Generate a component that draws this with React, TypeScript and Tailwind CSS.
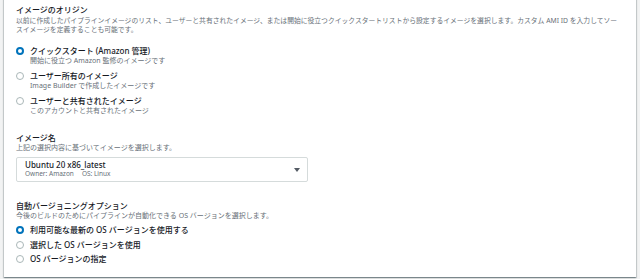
const originOptions = [
  { label: "クイックスタート (Amazon 管理)", sub: "開始に役立つ Amazon 監修のイメージです", checked: true },
  { label: "ユーザー所有のイメージ", sub: "Image Builder で作成したイメージです", checked: false },
  { label: "ユーザーと共有されたイメージ", sub: "このアカウントと共有されたイメージ", checked: false },
];

const versionOptions = [
  { label: "利用可能な最新の OS バージョンを使用する", checked: true },
  { label: "選択した OS バージョンを使用", checked: false },
  { label: "OS バージョンの指定", checked: false },
];

function Radio({ checked }: { checked: boolean }) {
  return (
    <span
      className={
        checked
          ? "block w-[8px] h-[8px] rounded-full border-[2.5px] border-[#0073bb] bg-white shrink-0"
          : "block w-[8px] h-[8px] rounded-full border border-[#aab7b8] bg-white shrink-0"
      }
    />
  );
}

export default function App() {
  return (
    <div className="w-[640px] h-[279px] overflow-hidden bg-[#f2f3f3] px-1 font-['Noto_Sans','Noto_Sans_CJK_JP',sans-serif] text-[#16191f]">
      <div className="-mt-2 bg-white pl-3 pr-3 pt-[13px] pb-[10px] shadow-[0_1px_1px_0_rgba(0,28,36,0.3),1px_1px_1px_0_rgba(0,28,36,0.15),-1px_1px_1px_0_rgba(0,28,36,0.15)]">
        {/* Image origin */}
        <div className="text-[8px] leading-[10px] font-medium">イメージのオリジン</div>
        <p className="mt-[1px] text-[6.8px] leading-[9px] text-[#687078] w-[602px]">
          以前に作成したパイプラインイメージのリスト、ユーザーと共有されたイメージ、または開始に役立つクイックスタートリストから設定するイメージを選択します。カスタム AMI ID を入力してソースイメージを定義することも可能です。
        </p>
        <div className="mt-[11px] flex flex-col gap-[4px]">
          {originOptions.map((o) => (
            <div key={o.label} className="flex gap-[6px]">
              <div className="h-[11px] flex items-center">
                <Radio checked={o.checked} />
              </div>
              <div>
                <div className="text-[8px] leading-[11px] font-medium">{o.label}</div>
                <div className="text-[7px] leading-[10px] text-[#687078]">{o.sub}</div>
              </div>
            </div>
          ))}
        </div>

        {/* Image name */}
        <div className="mt-[17px] text-[8px] leading-[10px] font-medium">イメージ名</div>
        <div className="text-[7px] leading-[9px] text-[#687078]">上記の選択内容に基づいてイメージを選択します。</div>
        <div className="mt-[5px] w-[292px] border border-[#d5dbdb] rounded-[2px] pl-[8px] pr-[7px] pt-[2px] pb-[3px] flex items-center justify-between">
          <div>
            <div className="text-[8px] leading-[10px] font-medium">Ubuntu 20 x86_latest</div>
            <div className="text-[6.5px] leading-[8px] text-[#687078] flex gap-[8px]">
              <span>Owner: Amazon</span>
              <span>OS: Linux</span>
            </div>
          </div>
          <svg width="6" height="4" viewBox="0 0 6 4" className="mt-[1px]">
            <path d="M0 0h6L3 4z" fill="#545b64" />
          </svg>
        </div>

        {/* Versioning */}
        <div className="mt-[19px] text-[8px] leading-[10px] font-medium">自動バージョニングオプション</div>
        <div className="text-[7px] leading-[9px] text-[#687078]">今後のビルドのためにパイプラインが自動化できる OS バージョンを選択します。</div>
        <div className="mt-[3px] flex flex-col">
          {versionOptions.map((o) => (
            <div key={o.label} className="flex items-center gap-[6px] h-[14.5px]">
              <Radio checked={o.checked} />
              <span className="text-[8px] leading-[10px] font-medium">{o.label}</span>
            </div>
          ))}
        </div>
      </div>
    </div>
  );
}
